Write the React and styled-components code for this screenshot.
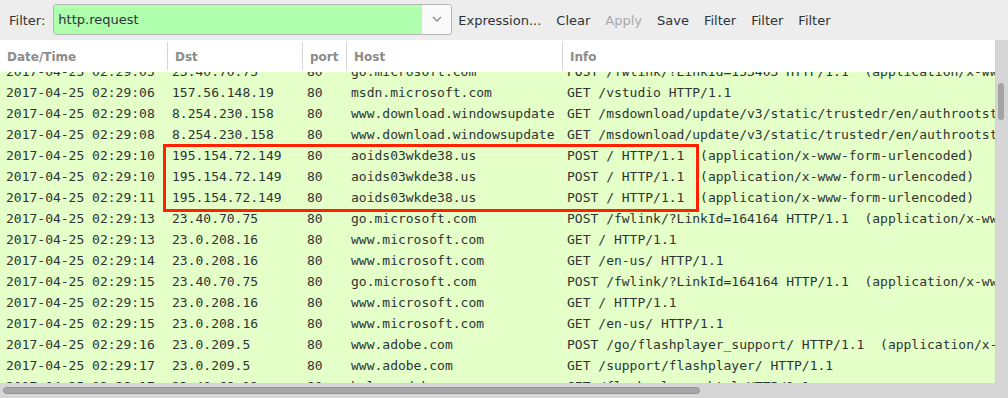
import React from 'react';
import styled, { createGlobalStyle } from 'styled-components';

const GlobalStyle = createGlobalStyle`
  html, body {
    margin: 0;
    padding: 0;
    background: #ededed;
  }
`;

const COLUMNS = [
  { key: 'time', label: 'Date/Time', width: 167 },
  { key: 'dst', label: 'Dst', width: 135 },
  { key: 'port', label: 'port', width: 44 },
  { key: 'host', label: 'Host', width: 216 },
  { key: 'info', label: 'Info', width: null },
];

const FORM = '  (application/x-www-form-urlencoded)';
const TRUSTED = 'GET /msdownload/update/v3/static/trustedr/en/authrootstl.cab HTTP/1.1';

const packets = [
  ['2017-04-25 02:29:05', '23.40.70.75', '80', 'go.microsoft.com', 'POST /fwlink/?LinkId=153403 HTTP/1.1' + FORM],
  ['2017-04-25 02:29:06', '157.56.148.19', '80', 'msdn.microsoft.com', 'GET /vstudio HTTP/1.1'],
  ['2017-04-25 02:29:08', '8.254.230.158', '80', 'www.download.windowsupdate.com', TRUSTED],
  ['2017-04-25 02:29:08', '8.254.230.158', '80', 'www.download.windowsupdate.com', TRUSTED],
  ['2017-04-25 02:29:10', '195.154.72.149', '80', 'aoids03wkde38.us', 'POST / HTTP/1.1' + FORM],
  ['2017-04-25 02:29:10', '195.154.72.149', '80', 'aoids03wkde38.us', 'POST / HTTP/1.1' + FORM],
  ['2017-04-25 02:29:11', '195.154.72.149', '80', 'aoids03wkde38.us', 'POST / HTTP/1.1' + FORM],
  ['2017-04-25 02:29:13', '23.40.70.75', '80', 'go.microsoft.com', 'POST /fwlink/?LinkId=164164 HTTP/1.1' + FORM],
  ['2017-04-25 02:29:13', '23.0.208.16', '80', 'www.microsoft.com', 'GET / HTTP/1.1'],
  ['2017-04-25 02:29:14', '23.0.208.16', '80', 'www.microsoft.com', 'GET /en-us/ HTTP/1.1'],
  ['2017-04-25 02:29:15', '23.40.70.75', '80', 'go.microsoft.com', 'POST /fwlink/?LinkId=164164 HTTP/1.1' + FORM],
  ['2017-04-25 02:29:15', '23.0.208.16', '80', 'www.microsoft.com', 'GET / HTTP/1.1'],
  ['2017-04-25 02:29:15', '23.0.208.16', '80', 'www.microsoft.com', 'GET /en-us/ HTTP/1.1'],
  ['2017-04-25 02:29:16', '23.0.209.5', '80', 'www.adobe.com', 'POST /go/flashplayer_support/ HTTP/1.1' + FORM],
  ['2017-04-25 02:29:17', '23.0.209.5', '80', 'www.adobe.com', 'GET /support/flashplayer/ HTTP/1.1'],
  ['2017-04-25 02:29:17', '23.40.69.12', '80', 'helpx.adobe.com', 'GET /flash-player.html HTTP/1.1'],
];

const Window = styled.div`
  width: 1008px;
  height: 398px;
  display: flex;
  flex-direction: column;
  background: #ededed;
  overflow: hidden;
  font-family: 'DejaVu Sans', 'Liberation Sans', sans-serif;
`;

const Toolbar = styled.div`
  height: 40px;
  flex: none;
  display: flex;
  align-items: center;
  padding-left: 9px;
  box-sizing: border-box;
  font-size: 13px;
  color: #2e3436;
`;

const FilterLabel = styled.span`
  margin-right: 8px;
`;

const Combo = styled.div`
  width: 399px;
  height: 31px;
  box-sizing: border-box;
  display: flex;
  border: 1px solid #b6b6b3;
  border-radius: 3px;
  overflow: hidden;
  margin-right: 6px;
  margin-top: -2px;
`;

const FilterInput = styled.div`
  flex: 1;
  background: #afffaf;
  display: flex;
  align-items: center;
  padding-left: 4px;
`;

const ComboArrow = styled.div`
  width: 29px;
  background: #fafafa;
  display: flex;
  align-items: center;
  justify-content: center;
`;

const ToolButton = styled.span`
  margin-right: 15px;
  color: ${({ disabled }) => (disabled ? '#a9aaa8' : '#2e3436')};
`;

const ListArea = styled.div`
  flex: 1;
  display: grid;
  grid-template-columns: 1fr 13px;
  grid-template-rows: 1fr 15px;
  min-height: 0;
`;

const TableView = styled.div`
  display: flex;
  flex-direction: column;
  min-height: 0;
  min-width: 0;
`;

const HeaderRow = styled.div`
  height: 32px;
  flex: none;
  display: flex;
  background: #ffffff;
`;

const HeaderCell = styled.div`
  ${({ width }) => (width ? `width: ${width}px; flex: none;` : 'flex: 1;')}
  box-sizing: border-box;
  display: flex;
  align-items: center;
  padding-left: 7px;
  padding-top: 1px;
  margin: 2px 0;
  font-size: 12px;
  font-weight: bold;
  color: #8b8c89;
  border-left: ${({ first }) => (first ? 'none' : '1px solid #d5d5d3')};
`;

const Body = styled.div`
  flex: 1;
  position: relative;
  overflow: hidden;
  background: #e4ffc7;
`;

const Rows = styled.div`
  margin-top: -11px;
`;

const Row = styled.div`
  height: 21px;
  display: flex;
  align-items: center;
  background: #e4ffc7;
  font-family: 'DejaVu Sans Mono', 'Liberation Mono', monospace;
  font-size: 13px;
  color: #2e3436;
`;

const Cell = styled.div`
  ${({ width }) => (width ? `width: ${width - 6}px; flex: none; margin-right: 6px;` : 'flex: 1; min-width: 0;')}
  box-sizing: border-box;
  padding-left: ${({ first }) => (first ? 6 : 5)}px;
  white-space: pre;
  overflow: hidden;
`;

const Highlight = styled.div`
  position: absolute;
  left: 163px;
  top: 72px;
  width: 536px;
  height: 68px;
  box-sizing: border-box;
  border: 3.5px solid #ff2200;
  pointer-events: none;
`;

const VTrack = styled.div`
  background: #d6d6d6;
  position: relative;
  border-left: 1px solid #cfcfcf;
`;

const VThumb = styled.div`
  position: absolute;
  left: 2px;
  top: 43px;
  width: 6px;
  height: 37px;
  border-radius: 3px;
  background: #a4a4a4;
`;

const HTrack = styled.div`
  grid-column: 1 / span 2;
  background: #d6d6d6;
  position: relative;
`;

const HThumb = styled.div`
  position: absolute;
  left: 3px;
  top: 4px;
  width: 697px;
  height: 7px;
  border-radius: 4px;
  background: #a6a6a6;
  border: 1px solid #939393;
  box-sizing: border-box;
`;

const Chevron = () => (
  <svg width="10" height="6" viewBox="0 0 10 6">
    <path d="M1 1 L5 5 L9 1" fill="none" stroke="#8a8c89" strokeWidth="1.3" />
  </svg>
);

const App = () => {
  return (
    <Window>
      <GlobalStyle />
      <Toolbar>
        <FilterLabel>Filter:</FilterLabel>
        <Combo>
          <FilterInput>http.request</FilterInput>
          <ComboArrow><Chevron /></ComboArrow>
        </Combo>
        <ToolButton>Expression...</ToolButton>
        <ToolButton>Clear</ToolButton>
        <ToolButton disabled>Apply</ToolButton>
        <ToolButton>Save</ToolButton>
        <ToolButton>Filter</ToolButton>
        <ToolButton>Filter</ToolButton>
        <ToolButton>Filter</ToolButton>
      </Toolbar>
      <ListArea>
        <TableView>
          <HeaderRow>
            {COLUMNS.map((col, i) => (
              <HeaderCell key={col.key} width={col.width} first={i === 0}>
                {col.label}
              </HeaderCell>
            ))}
          </HeaderRow>
          <Body>
            <Rows>
              {packets.map((packet, r) => (
                <Row key={r}>
                  {packet.map((value, i) => (
                    <Cell key={i} width={COLUMNS[i].width} first={i === 0}>
                      {value}
                    </Cell>
                  ))}
                </Row>
              ))}
            </Rows>
            <Highlight />
          </Body>
        </TableView>
        <VTrack>
          <VThumb />
        </VTrack>
        <HTrack>
          <HThumb />
        </HTrack>
      </ListArea>
    </Window>
  );
};

export default App;
